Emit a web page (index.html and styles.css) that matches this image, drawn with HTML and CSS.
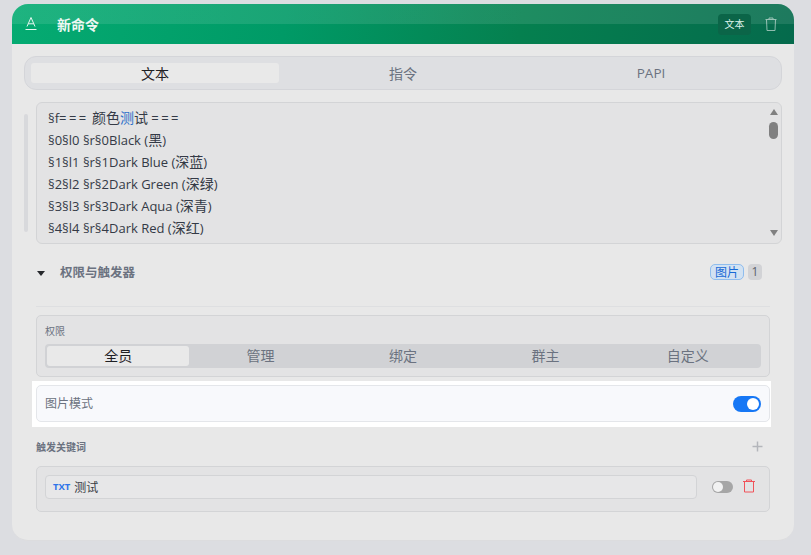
FILE: index.html
```html
<!DOCTYPE html>
<html lang="zh">
<head>
<meta charset="utf-8">
<title>新命令</title>
<link rel="stylesheet" href="styles.css">
</head>
<body>
<main class="card">
  <header class="head">
    <svg class="head-icon" viewBox="0 0 14 16" width="14" height="16" fill="none" stroke="currentColor" stroke-width="1"><path d="M3 10.500 7 1.500l4 9M4.300 7.800h5.400M1.500 13.500h11"/></svg>
    <span class="head-title">新命令</span>
    <span class="head-badge">文本</span>
    <svg class="head-trash" viewBox="0 0 14 16" width="14" height="16" fill="none" stroke="currentColor" stroke-width="1"><path d="M1.500 3.500h11M5 3.500V2h4v1.500M2.500 3.500l.5 11h8l.5-11"/></svg>
  </header>
  <div class="body">
    <nav class="tabs">
      <span class="tab tab-on">文本</span>
      <span class="tab">指令</span>
      <span class="tab tab-latin">PAPI</span>
    </nav>
    <div class="editor-row">
      <div class="gutter"></div>
      <div class="editor">
        <div class="lines">
          <div>§f<span class="wide">===</span> <span class="cjk">颜色<span class="blue">测</span>试</span> <span class="wide">===</span></div>
          <div>§0§l0 §r§0Black (<span class="cjk">黑</span>)</div>
          <div>§1§l1 §r§1Dark Blue (<span class="cjk">深蓝</span>)</div>
          <div>§2§l2 §r§2Dark Green (<span class="cjk">深绿</span>)</div>
          <div>§3§l3 §r§3Dark Aqua (<span class="cjk">深青</span>)</div>
          <div>§4§l4 §r§4Dark Red (<span class="cjk">深红</span>)</div>
        </div>
        <div class="scroll">
          <i class="arrow-up"></i>
          <i class="thumb"></i>
          <i class="arrow-down"></i>
        </div>
      </div>
    </div>
    <section class="fold">
      <i class="caret"></i>
      <span class="fold-title">权限与触发器</span>
      <span class="chip">图片</span>
      <span class="count">1</span>
    </section>
    <div class="inner">
      <div class="perm">
        <div class="perm-label">权限</div>
        <div class="seg">
          <span class="seg-item seg-on">全员</span>
          <span class="seg-item">管理</span>
          <span class="seg-item">绑定</span>
          <span class="seg-item">群主</span>
          <span class="seg-item">自定义</span>
        </div>
      </div>
      <div class="band">
        <div class="mode">
          <span>图片模式</span>
          <span class="switch"><i></i></span>
        </div>
      </div>
      <div class="kw-head">
        <span class="kw-title">触发关键词</span>
        <svg class="plus" viewBox="0 0 11 11" width="11" height="11" fill="none" stroke="currentColor" stroke-width="1.500"><path d="M5.500.5v10M.5 5.500h10"/></svg>
      </div>
      <div class="kw">
        <div class="kw-input"><b>TXT</b><span>测试</span></div>
        <span class="switch-off"><i></i></span>
        <svg class="kw-trash" viewBox="0 0 14 14" width="14" height="14" fill="none" stroke="currentColor" stroke-width="1"><path d="M1 2.500h12M4.500 2.500V1h5v1.500M2.500 2.500v10.500h9V2.500"/></svg>
      </div>
    </div>
  </div>
</main>
</body>
</html>
```
FILE: styles.css
```css
* { box-sizing: border-box; }
html, body { height: 100%; }
body {
  margin: 0;
  padding: 4px 17px 14px 12px;
  background: #dcdde1;
  font-family: "Noto Sans CJK SC", sans-serif;
  color: #374151;
  overflow: hidden;
}
.card {
  height: 537px;
  background: #e8e8e8;
  border-radius: 16px;
  border-bottom: 1px solid #dcdcde;
  overflow: hidden;
}
.head {
  height: 40px;
  display: flex;
  align-items: center;
  padding: 0 16px 0 12px;
  color: #fff;
  background:
    linear-gradient(rgba(255,255,255,.1) 0 20px, transparent 20px),
    linear-gradient(100deg, #05ab72 0%, #009a66 35%, #05804f 65%, #056a4c 100%);
}
.head-icon { opacity: .9; }
.head-title { margin-left: 19px; font-size: 14px; font-weight: 700; color: #eef8f3; }
.head-badge {
  margin-left: auto;
  width: 33px;
  height: 21px;
  border-radius: 4px;
  background: #0b6548;
  font-size: 10px;
  line-height: 19px;
  text-align: center;
  color: #dff3ec;
}
.head-trash { margin-left: 13px; opacity: .55; }
.body { padding: 12px 12px 0; }
.tabs {
  height: 34px;
  display: flex;
  padding: 6px;
  background: #dedfe2;
  border: 1px solid #d4d5d9;
  border-radius: 12px;
}
.tab {
  flex: 1;
  height: 20px;
  font-size: 14px;
  line-height: 20px;
  text-align: center;
  color: #6b7280;
}
.tab-latin { font-family: "Open Sans", sans-serif; font-size: 13.500px; }
.tab-on { background: #e9e9e9; color: #1f2024; border-radius: 3px; }
.editor-row { display: flex; margin-top: 12px; }
.gutter {
  width: 4px;
  height: 118px;
  margin: 12px 8px 0 0;
  background: #d8d9dc;
  border-radius: 2px;
}
.editor {
  flex: 1;
  height: 142px;
  display: flex;
  background: #e3e3e4;
  border: 1px solid #d3d4d6;
  border-radius: 6px;
}
.lines {
  flex: 1;
  padding: 3px 11px 0;
  font-family: "Open Sans", sans-serif;
  font-size: 13px;
  line-height: 22px;
  color: #343a46;
  white-space: nowrap;
}
.lines > div { height: 22px; }
.cjk { font-family: "Noto Sans CJK SC", sans-serif; font-size: 14px; }
.wide { letter-spacing: 2.400px; }
.blue { color: #2a6fc9; }
.scroll {
  width: 15px;
  display: flex;
  flex-direction: column;
  align-items: center;
  padding: 6px 0 7px;
}
.arrow-up { border: solid transparent; border-width: 0 4.500px 6px; border-bottom-color: #808080; }
.thumb { width: 9px; height: 17px; margin-top: 7px; background: #808080; border-radius: 5px; }
.arrow-down { margin-top: auto; border: solid transparent; border-width: 6px 4.500px 0; border-top-color: #808080; }
.fold {
  height: 28px;
  margin-top: 14px;
  display: flex;
  align-items: center;
  padding: 0 20px 0 13px;
}
.caret { border: solid transparent; border-width: 5px 4.500px 0; border-top-color: #26282c; margin-top: 3px; }
.fold-title { margin: 0 0 2px 15px; font-size: 12.500px; font-weight: 700; color: #6b7280; }
.chip {
  margin-left: auto;
  width: 34px;
  height: 16px;
  font-size: 12px;
  line-height: 14px;
  text-align: center;
  color: #1769d6;
  background: #d2e2f2;
  border: 1px solid #8fbdee;
  border-radius: 5px;
}
.count {
  margin-left: 4px;
  width: 14px;
  height: 16px;
  font-family: "Open Sans", sans-serif;
  font-size: 12px;
  line-height: 16px;
  text-align: center;
  color: #5d626b;
  background: #d2d3d6;
  border-radius: 4px;
}
.inner { margin: 20px 12px 0; border-top: 1px solid #dedfe1; padding-top: 8px; }
.perm {
  height: 62px;
  padding: 8px 8px 0;
  background: #e3e3e4;
  border: 1px solid #d3d4d6;
  border-radius: 5px;
}
.perm-label { font-size: 10px; line-height: 14px; color: #6b7280; }
.seg {
  height: 24px;
  margin-top: 6px;
  padding: 2px;
  display: flex;
  background: #d1d2d5;
  border-radius: 4px;
}
.seg-item {
  flex: 1;
  font-size: 14px;
  line-height: 19px;
  height: 20px;
  text-align: center;
  color: #6b7280;
}
.seg-on { background: #e9e9e9; color: #1f2024; border-radius: 3px; }
.band {
  margin: 4px 0 0 -4px;
  width: 739px;
  padding: 4px 0 5px 4px;
  background: #fff;
}
.mode {
  width: 734px;
  height: 37px;
  display: flex;
  align-items: center;
  justify-content: space-between;
  padding: 0 8px 0 8px;
  font-size: 12px;
  line-height: 16px;
  color: #6b7280;
  background: #f8f9fc;
  border: 1px solid #e4e6ea;
  border-radius: 5px;
}
.mode > span:first-child { margin-bottom: 2px; }
.switch {
  width: 28px;
  height: 16px;
  padding: 2px;
  display: flex;
  justify-content: flex-end;
  background: #1677f5;
  border-radius: 8px;
}
.switch i { width: 12px; height: 12px; background: #fff; border-radius: 50%; }
.kw-head {
  height: 18px;
  margin-top: 10px;
  margin-bottom: 11px;
  display: flex;
  align-items: center;
  justify-content: space-between;
  padding-right: 7px;
}
.kw-title { font-size: 10px; font-weight: 700; color: #6b7280; }
.plus { color: #b4b6bb; margin-top: 1px; }
.kw {
  height: 46px;
  padding: 8px 8px 0;
  display: flex;
  align-items: flex-start;
  background: #e3e3e4;
  border: 1px solid #d3d4d6;
  border-radius: 5px;
}
.kw-input {
  flex: none;
  width: 652px;
  height: 24px;
  display: flex;
  align-items: center;
  padding-left: 7px;
  background: #e7e7e8;
  border: 1px solid #d3d4d6;
  border-radius: 4px;
  font-size: 12px;
  line-height: 16px;
  color: #383c44;
}
.kw-input b { font-family: "Open Sans", sans-serif; font-size: 9.500px; color: #2f74e8; margin-right: 4px; }
.switch-off {
  flex: none;
  width: 21px;
  height: 12px;
  margin: 6px 0 0 15px;
  padding: 1px;
  background: #a6a6a6;
  border-radius: 6px;
  display: flex;
}
.switch-off i { width: 10px; height: 10px; background: #f2f2f2; border-radius: 50%; }
.kw-trash { flex: none; margin: 4px 0 0 9px; color: #f0535a; }
```
